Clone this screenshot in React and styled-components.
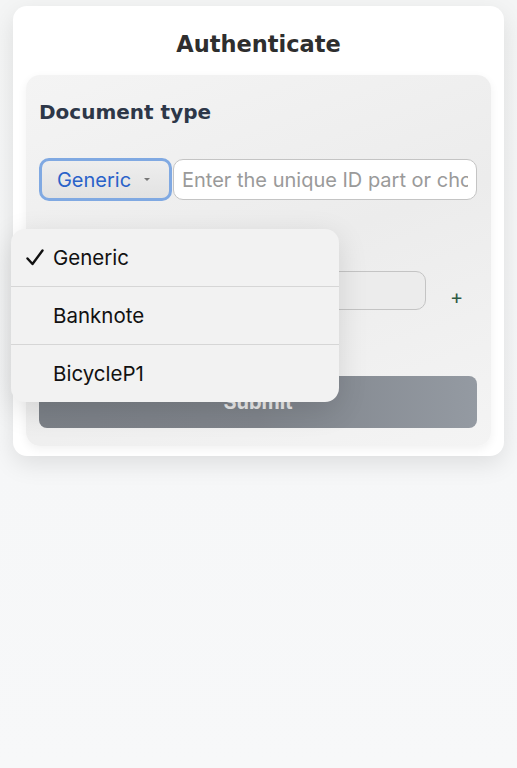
import React from 'react';
import styled, { createGlobalStyle } from 'styled-components';

const GlobalStyle = createGlobalStyle`
  html, body {
    margin: 0;
    padding: 0;
  }
  body {
    min-height: 768px;
    background: linear-gradient(180deg, #f4f5f5 0%, #f6f7f8 60%, #f7f8f9 100%);
    font-family: Inter, "Liberation Sans", sans-serif;
  }
`;

const Page = styled.div`
  position: relative;
  padding: 6px 13px 0;
`;

const Card = styled.div`
  background: #ffffff;
  border-radius: 14px;
  padding: 24px 13px 10px;
  box-shadow: 0 8px 24px rgba(0, 0, 0, 0.1);
`;

const Title = styled.h1`
  margin: 0 0 17px;
  text-align: center;
  font-family: "DejaVu Sans", Verdana, sans-serif;
  font-size: 22.5px;
  line-height: 28px;
  font-weight: bold;
  color: #2e2e2e;
`;

const Panel = styled.div`
  border-radius: 14px;
  padding: 23px 14px 18px 13px;
  background: linear-gradient(160deg, #f4f4f4 0%, #ececec 50%, #f4f4f4 100%);
  box-shadow: 0 3px 10px rgba(0, 0, 0, 0.06);
`;

const Label = styled.div`
  font-family: "DejaVu Sans", Verdana, sans-serif;
  font-size: 20px;
  font-weight: bold;
  line-height: 28px;
  color: #2d3748;
  margin-bottom: 32px;
`;

const SelectRow = styled.div`
  display: flex;
  align-items: center;
  gap: 1px;
`;

const SelectBtn = styled.div`
  box-sizing: border-box;
  width: 133px;
  height: 43px;
  flex-shrink: 0;
  display: flex;
  align-items: center;
  justify-content: center;
  gap: 13px;
  border-radius: 10px;
  border: 3px solid #80a9e2;
  background: linear-gradient(180deg, #eeeeee 0%, #e2e2e2 100%);
  color: #2a62c9;
  font-size: 20px;
  padding-right: 4px;
`;

const Caret = styled.span`
  width: 0;
  height: 0;
  border-left: 3px solid transparent;
  border-right: 3px solid transparent;
  border-top: 3px solid #777;
`;

const TextInput = styled.input`
  box-sizing: border-box;
  flex: 1;
  min-width: 0;
  height: ${({ h }) => h || 41}px;
  border: 1px solid #c4c4c4;
  border-radius: 10px;
  background: ${({ ghost }) => (ghost ? '#ececec' : '#ffffff')};
  padding: 0 8px;
  font-family: Inter, "Liberation Sans", sans-serif;
  font-size: 20px;
  color: #333;
  outline: none;
  &::placeholder {
    color: #9a9a9a;
  }
`;

const FieldRow = styled.div`
  display: flex;
  align-items: center;
  gap: 24px;
  margin-top: 70px;
`;

const Plus = styled.span`
  width: 14px;
  color: #2f5b45;
  font-size: 20px;
  margin-right: 13px;
  margin-top: 12px;
`;

const Submit = styled.div`
  margin-top: 66px;
  height: 52px;
  border-radius: 8px;
  background: linear-gradient(90deg, #7b8087 0%, #7f848b 50%, #949aa2 100%);
  color: #e9e9e9;
  font-family: Inter, "Liberation Sans", sans-serif;
  font-weight: bold;
  font-size: 20px;
  display: flex;
  align-items: center;
  justify-content: center;
`;

const Menu = styled.div`
  position: absolute;
  left: 11px;
  top: 229px;
  width: 328px;
  border-radius: 14px;
  background: #f2f2f2;
  box-shadow: 0 8px 30px rgba(0, 0, 0, 0.12);
  overflow: hidden;
`;

const MenuItem = styled.div`
  height: 57px;
  display: flex;
  align-items: center;
  font-size: 20.5px;
  color: #111;
  border-top: ${({ first }) => (first ? 'none' : '1px solid #d6d6d6')};
`;

const CheckSlot = styled.span`
  width: 42px;
  padding-left: 15px;
  box-sizing: border-box;
  display: flex;
  align-items: center;
`;

const CheckIcon = () => (
  <svg width="18" height="17" viewBox="0 0 18 17">
    <path d="M1.5 9.5 L6.5 15 L16.5 1.5" fill="none" stroke="#111" strokeWidth="2.4" strokeLinecap="round" strokeLinejoin="round" />
  </svg>
);

const options = ['Generic', 'Banknote', 'BicycleP1'];

export default function App() {
  return (
    <Page>
      <GlobalStyle />
      <Card>
        <Title>Authenticate</Title>
        <Panel>
          <Label>Document type</Label>
          <SelectRow>
            <SelectBtn>
              Generic <Caret />
            </SelectBtn>
            <TextInput placeholder="Enter the unique ID part or choose" readOnly />
          </SelectRow>
          <FieldRow>
            <TextInput ghost h={39} readOnly />
            <Plus>+</Plus>
          </FieldRow>
          <Submit>Submit</Submit>
        </Panel>
      </Card>
      <Menu>
        {options.map((o, i) => (
          <MenuItem key={o} first={i === 0}>
            <CheckSlot>{i === 0 ? <CheckIcon /> : null}</CheckSlot>
            {o}
          </MenuItem>
        ))}
      </Menu>
    </Page>
  );
}
